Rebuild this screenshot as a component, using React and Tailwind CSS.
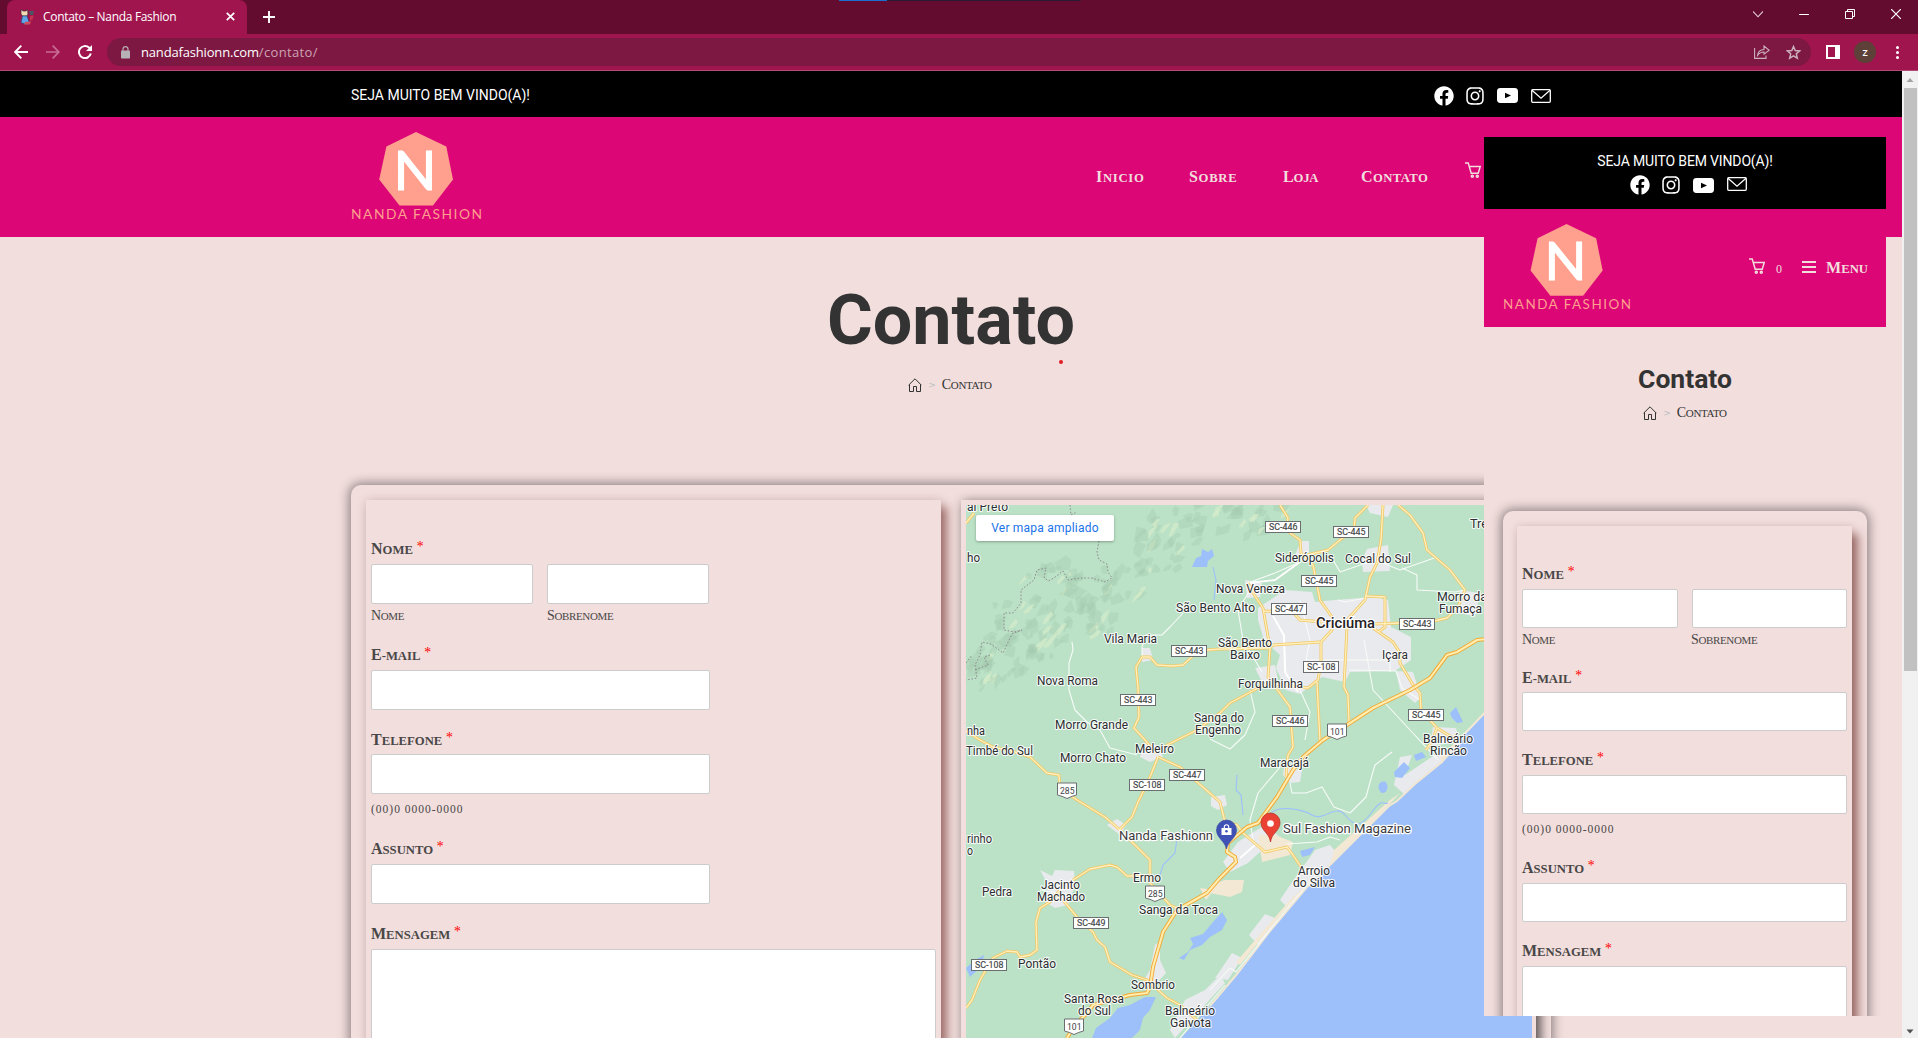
import React from "react";
import { FaFacebook, FaInstagram } from "react-icons/fa";

const CAPS_BOLD = "block font-['Liberation_Serif',serif] text-[12.7px] font-bold uppercase first-letter:text-[16px]";
const CAPS_THIN = "block font-['Liberation_Serif',serif] text-[11px] uppercase tracking-[-0.35px] first-letter:text-[14px]";

/* ---------- icons ---------- */

function YoutubeIcon() {
  return (
    <svg className="h-[15px] w-[21px]" viewBox="0 0 21 15">
      <rect width="21" height="15" rx="3.4" fill="#fff" />
      <path d="M8 4.8 L14 7.5 L8 10.2 Z" fill="#000" />
    </svg>
  );
}

function MailIcon() {
  return (
    <svg className="h-[14px] w-5" viewBox="0 0 20 14" fill="none" stroke="#fff" strokeWidth="1.3">
      <rect x="0.7" y="0.7" width="18.6" height="12.6" rx="1" />
      <path d="M1 1.2 L10 9.2 L19 1.2" />
    </svg>
  );
}

function CartIcon() {
  return (
    <svg className="h-4 w-4 shrink-0" viewBox="0 0 16 16" fill="none" stroke="#f2dedd" strokeWidth="1.5">
      <path d="M0 0.9 H3.2 L6.2 11.2 H13.2 L15.2 4.6 H4.3" />
      <circle cx="7.3" cy="14.2" r="1" />
      <circle cx="12.3" cy="14.2" r="1" />
    </svg>
  );
}

function HomeIcon() {
  return (
    <svg className="h-[14px] w-[14px]" viewBox="0 0 14 14" fill="none" stroke="#333" strokeWidth="1">
      <path d="M0.6 7.2 L7 0.8 L13.4 7.2 M1.5 6.4 V13.5 H5.5 V8.5 H8.5 V13.5 H12.5 V6.4" />
    </svg>
  );
}

function Logo({ className }) {
  return (
    <svg className={className} viewBox="0 0 131 90">
      <path d="M65 0 L95.3 14.6 L102 47.6 L82 73.5 H48.5 L28.2 47.6 L35.4 14.6 Z" fill="#ff9f8d" />
      <text x="42.5" y="57.5" fontFamily="Lato, sans-serif" fontSize="54" textLength="43" lengthAdjust="spacingAndGlyphs" fill="#fff" stroke="#fff" strokeWidth="1.2">N</text>
      <text x="0" y="86.6" fontFamily="Lato, sans-serif" fontSize="13.8" textLength="131" fill="#ff9f8d">NANDA FASHION</text>
    </svg>
  );
}

function Social({ mailClass }) {
  return (
    <div className="flex items-center text-white">
      <FaFacebook className="h-5 w-5" />
      <FaInstagram className="ml-[11px] h-[20px] w-[20px]" />
      <span className="ml-3"><YoutubeIcon /></span>
      <span className={mailClass}><MailIcon /></span>
    </div>
  );
}

function Breadcrumb({ className }) {
  return (
    <div className={`flex items-center justify-center leading-[18px] text-[#333] ${className}`}>
      <HomeIcon />
      <span className="ml-[6px] font-['DejaVu_Sans',sans-serif] text-[9px] text-[#b9c0c0]">&gt;</span>
      <span className={`ml-[6px] ${CAPS_THIN}`}>Contato</span>
    </div>
  );
}

/* ---------- browser frame ---------- */

function TabBar() {
  return (
    <div className="relative flex h-[34px] shrink-0 bg-[#640c30] pl-[7px]">
      <div className="flex h-[34px] w-60 items-center rounded-t-lg bg-[#a1154f] pb-[1px] pl-3 pr-[12px]">
        <svg className="h-4 w-4" viewBox="0 0 16 16">
          <path d="M2 0.5 L4 2 L7 2 L8.5 0.5 L9 5 L8 7 H3.5 L2 5 Z" fill="#f3d9b4" stroke="#3b2a35" strokeWidth="0.7" />
          <path d="M3.5 7 H8 L10 13 L7 15.5 L2 13.5 Z" fill="#5ea4ea" stroke="#27446b" strokeWidth="0.6" />
          <path d="M10 2 H15 L14 6 H11 Z" fill="#4c5563" />
          <path d="M11 7 L14.5 6.5 L14 10 L11 12 Z" fill="#c3324e" />
          <path d="M6 13 L12 12.5 L11 15.5 L5 15.5 Z" fill="#d44b5c" />
        </svg>
        <span className="ml-2 whitespace-nowrap font-['Open_Sans',sans-serif] text-[12px] tracking-[-0.32px] text-white">Contato – Nanda Fashion</span>
        <svg className="ml-auto h-[9px] w-[9px]" viewBox="0 0 9 9" stroke="#fff" strokeWidth="1.7"><path d="M0.8 0.8 L8.2 8.2 M8.2 0.8 L0.8 8.2" /></svg>
      </div>
      <svg className="ml-4 mt-[11px] h-3 w-3" viewBox="0 0 12 12" stroke="#fff" strokeWidth="1.9"><path d="M6 0 V12 M0 6 H12" /></svg>
      <div className="absolute left-[839px] top-0 flex h-[1px] w-[242px] bg-[#2b1a33]"><div className="w-12 bg-[#1a6fd0]" /></div>
      <div className="ml-auto mr-[17px] flex h-[28px] items-center gap-[36px]">
        <svg className="h-[10px] w-[10px]" viewBox="0 0 10 10" fill="none" stroke="#e3cdd6" strokeWidth="1.1"><path d="M0 2.5 L5 7.8 L10 2.5" /></svg>
        <svg className="h-[10px] w-[10px]" viewBox="0 0 10 10"><path d="M0 5 H10 V6 H0 Z" fill="#fff" /></svg>
        <svg className="h-[10px] w-[10px]" viewBox="0 0 10 10" fill="none" stroke="#fff" strokeWidth="1"><path d="M0.5 2.5 H7.5 V9.5 H0.5 Z M2.5 2.5 V0.5 H9.5 V7.5 H7.5" /></svg>
        <svg className="h-[10px] w-[10px]" viewBox="0 0 10 10" stroke="#fff" strokeWidth="1.2"><path d="M0 0 L10 10 M10 0 L0 10" /></svg>
      </div>
    </div>
  );
}

function Toolbar() {
  return (
    <div className="flex h-[37px] shrink-0 items-center border-b border-[#b14a78] bg-[#a1154f] pl-[14px]">
      <svg className="h-[14px] w-[14px]" viewBox="0 0 14 14" fill="none" stroke="#fff" strokeWidth="1.9"><path d="M14 7 H1.5 M7.3 0.7 L1.2 7 L7.3 13.3" /></svg>
      <svg className="ml-[18px] h-[14px] w-[14px]" viewBox="0 0 14 14" fill="none" stroke="#c76d95" strokeWidth="1.7"><path d="M0 7 H12.5 M6.7 0.7 L12.8 7 L6.7 13.3" /></svg>
      <svg className="ml-[18px] h-[14px] w-[14px]" viewBox="0 0 14 14" fill="none" stroke="#fff" strokeWidth="2"><path d="M12.8 8.6 A6 6 0 1 1 11 2.6 L12.6 4.2" /><path d="M14 0 V6 H8 Z" fill="#fff" stroke="none" /></svg>
      <div className="ml-[15px] flex h-7 w-[1704px] items-center rounded-full bg-[#7d1842] pl-[14px] pr-[10px]">
        <svg className="h-[13px] w-[9px]" viewBox="0 0 9 13"><rect y="4.5" width="9" height="8" rx="0.8" fill="#b7b1b6" /><path d="M2 5 V3 a2.5 2.4 0 0 1 5 0 V5" fill="none" stroke="#b7b1b6" strokeWidth="1.2" /></svg>
        <span className="ml-[11px] mt-[1px] whitespace-nowrap font-['Open_Sans',sans-serif] text-[13px] text-white">
          <span className="tracking-[-0.17px]">nandafashionn.com</span><span className="tracking-[0.35px] text-[#cda3b4]">/contato/</span>
        </span>
        <svg className="ml-auto h-[14px] w-4" viewBox="0 0 16 14" fill="none" stroke="#cbb0bd" strokeWidth="1.1"><path d="M0.6 3 V13.4 H12 V10.5" /><path d="M3.6 10.3 C4 6.5 6.5 4.8 10 4.5 V1 L15.2 5.2 L10 9.2 V7 C7.5 7 5.3 8 3.6 10.3 Z" /></svg>
        <svg className="ml-4 h-[15px] w-[15px]" viewBox="0 0 15 15" fill="none" stroke="#cbb0bd" strokeWidth="1.5"><path d="M7.5 1.6 L9.2 5.5 L13.6 5.9 L10.3 8.8 L11.3 13.1 L7.5 10.8 L3.7 13.1 L4.7 8.8 L1.4 5.9 L5.8 5.5 Z" /></svg>
      </div>
      <div className="ml-[15px] h-[14px] w-[14px] border-2 border-r-[5px] border-white" />
      <div className="ml-[14px] flex h-[22px] w-[22px] items-center justify-center rounded-full bg-[#5d4037] font-['Open_Sans',sans-serif] text-[9px] font-semibold leading-none text-white">Z</div>
      <div className="ml-5 flex flex-col gap-[2px]">
        <div className="h-[3px] w-[3px] rounded-full bg-white" />
        <div className="h-[3px] w-[3px] rounded-full bg-white" />
        <div className="h-[3px] w-[3px] rounded-full bg-white" />
      </div>
    </div>
  );
}

function Scrollbar() {
  return (
    <div className="flex w-4 shrink-0 flex-col items-center bg-[#f1f1f1]">
      <svg className="h-[17px] w-4 shrink-0" viewBox="0 0 16 17"><path d="M4.5 11 L8 7 L11.5 11 Z" fill="#a3a3a3" /></svg>
      <div className="h-[583px] w-[13px] bg-[#c1c1c1]" />
      <svg className="mt-auto h-[14px] w-4 shrink-0" viewBox="0 0 16 14"><path d="M4.5 5.5 L8 9.5 L11.5 5.5 Z" fill="#505050" /></svg>
    </div>
  );
}

/* ---------- contact form ---------- */

function Label({ children, className = "" }) {
  return (
    <div className={`flex h-[18px] whitespace-nowrap leading-[18px] text-[#494747] ${className}`}>
      <span className={CAPS_BOLD}>{children}</span>
      <span className="-mt-[2px] ml-[3px] font-['Liberation_Serif',serif] text-[14px] italic text-[#ff0000]">*</span>
    </div>
  );
}

const BOX = "rounded-[2px] border border-[#ccc] bg-white";

function SubLabel({ children, className = "" }) {
  return <div className={`h-[18px] leading-[18px] text-[#494747] ${CAPS_THIN} ${className}`}>{children}</div>;
}

function PhoneHint({ className }) {
  return <div className={`h-[18px] font-['Liberation_Serif',serif] text-[11.5px] leading-[18px] tracking-[1px] text-[#494747] ${className}`}>(00)0 0000-0000</div>;
}

function DesktopForm() {
  return (
    <div className="w-[575px] shrink-0 bg-[#f2dedd] px-[5px] pt-10 shadow-[6px_7px_9px_rgba(120,60,55,0.65),0_0_10px_rgba(60,20,20,0.14)]">
      <Label>Nome</Label>
      <div className="mt-[6px] flex gap-[14px]">
        <div className={`h-10 w-[162px] ${BOX}`} />
        <div className={`h-10 w-[162px] ${BOX}`} />
      </div>
      <div className="mt-[3px] flex">
        <SubLabel className="w-[176px]">Nome</SubLabel>
        <SubLabel>Sobrenome</SubLabel>
      </div>
      <Label className="mt-[21px]">E-mail</Label>
      <div className={`mt-[6px] h-10 w-[339px] ${BOX}`} />
      <Label className="mt-[21px]">Telefone</Label>
      <div className={`mt-[5px] h-10 w-[339px] ${BOX}`} />
      <PhoneHint className="mt-[6px]" />
      <Label className="mt-[22px]">Assunto</Label>
      <div className={`mt-[6px] h-10 w-[339px] ${BOX}`} />
      <Label className="mt-[21px]">Mensagem</Label>
      <div className={`mt-[6px] h-40 w-[565px] ${BOX}`} />
    </div>
  );
}

function MobileForm() {
  return (
    <div className="h-full bg-[#f2dedd] px-[5px] pt-[39px] shadow-[6px_8px_9px_rgba(120,60,55,0.7),0_0_8px_rgba(60,20,20,0.12)]">
      <Label>Nome</Label>
      <div className="mt-[6px] flex gap-[14px]">
        <div className={`h-[39px] flex-1 ${BOX}`} />
        <div className={`h-[39px] flex-1 ${BOX}`} />
      </div>
      <div className="mt-[3px] flex">
        <SubLabel className="w-[169px]">Nome</SubLabel>
        <SubLabel>Sobrenome</SubLabel>
      </div>
      <Label className="mt-5">E-mail</Label>
      <div className={`mt-[5px] h-[39px] ${BOX}`} />
      <Label className="mt-5">Telefone</Label>
      <div className={`mt-[6px] h-[39px] ${BOX}`} />
      <PhoneHint className="mt-[6px]" />
      <Label className="mt-[21px]">Assunto</Label>
      <div className={`mt-[6px] h-[39px] ${BOX}`} />
      <Label className="mt-5">Mensagem</Label>
      <div className={`mt-[6px] h-40 ${BOX}`} />
    </div>
  );
}

/* ---------- map ---------- */

const ROADS = [
  "1220,649 1207,650 1196,653 1183,665 1172,666 1157,665 1150,657 1142,657 1136,667 1138,687 1139,717 1134,728 1145,740 1156,753",
  "1160,751 1167,745 1197,730 1220,713 1230,703 1258,688 1268,683",
  "966,523 974,513",
  "966,731 980,740 993,747 1012,751 1030,757 1047,773 1059,775 1060,788 1077,800 1105,817 1120,830 1150,860 1150,883 1170,905 1177,908",
  "1158,757 1150,777 1144,790 1138,802 1132,817 1120,829",
  "1158,757 1180,767 1197,782 1220,802 1225,822 1237,825 1243,833 1265,852 1287,847 1293,855 1303,870",
  "1073,880 1090,869 1110,865 1117,867 1127,876 1150,876",
  "1060,890 1050,902 1040,908 1036,922 1037,950 1030,955 1020,957 1017,952 1007,951 993,958 980,980 972,1000 966,1008",
  "1063,900 1077,917 1093,932 1097,940 1105,947 1110,962 1132,975 1147,980 1167,998 1180,1005 1197,1020",
  "1280,505 1288,518 1286,530 1300,540 1301,553 1313,565 1318,590 1320,600 1332,617 1332,630 1321,642 1321,663 1318,680 1308,688 1268,683",
  "1368,505 1355,518 1354,530 1340,540 1328,550 1307,555",
  "1383,505 1381,540 1377,563 1370,577 1365,600 1347,620",
  "1398,505 1410,515 1423,533 1427,550 1450,570 1465,590 1458,607 1447,618 1430,622 1373,624",
  "1365,596 1385,597 1385,627 1378,632",
  "1373,628 1393,642 1400,653 1400,663 1413,685 1420,693 1421,710 1437,728 1453,738",
  "1437,728 1432,741 1426,750",
  "1347,627 1344,687 1348,695 1349,723",
  "1317,682 1320,742",
  "1220,649 1270,648 1273,645 1320,642",
  "1248,583 1253,593 1263,608 1270,648 1268,677 1290,707 1293,747 1288,755 1286,777",
  "1263,611 1293,612 1300,620 1323,622",
];

const HIGHWAYS = [
  "1067,1038 1075,1025 1087,1013 1093,1005 1130,995 1147,993 1150,987 1153,967 1163,932 1177,910 1207,893 1220,878 1236,862 1235,857 1227,852 1228,843 1247,827 1258,823 1277,797 1293,770 1303,757 1323,740 1347,725 1373,708 1410,690 1430,678 1447,655 1457,652 1477,640 1487,639",
];

const MINOR = [
  "1072,642 1073,650 1069,663 1069,690 1075,710 1087,722 1100,730 1110,748 1137,755",
  "1183,613 1170,627 1162,635 1146,635 1142,647 1142,657",
  "1248,583 1275,573 1300,562",
  "1250,590 1238,610 1243,640 1262,672",
  "1402,568 1417,575 1417,590 1455,592 1465,590",
  "1300,560 1332,558 1340,572 1375,560 1400,570 1437,557",
  "1275,620 1284,637 1286,675 1300,690 1310,712 1305,740",
  "1210,739 1230,749 1245,735 1255,712 1250,690",
  "1364,640 1373,690 1410,730 1438,760",
  "1300,600 1310,640 1306,660 1390,660 1390,672",
  "1349,670 1396,671 1402,688 1420,700",
  "1338,600 1345,602 1365,598",
  "1280,767 1258,793 1250,820 1253,840",
  "1392,752 1375,765 1372,775 1366,797 1350,813 1334,807 1322,787 1306,793 1292,793 1290,783",
  "1287,844 1317,842 1330,837 1340,840",
  "1210,990 1230,968 1236,972 1290,905 1320,870",
  "1040,890 1060,893 1080,897",
  "1180,1038 1225,985",
];

const URBAN = [
  "1245,580 1262,583 1260,597 1247,598",
  "1301,541 1309,541 1309,556 1295,555",
  "1366,505 1393,505 1388,517 1370,513",
  "1367,549 1388,545 1390,571 1363,572 1362,560",
  "1258,608 1285,590 1312,592 1315,602 1335,600 1375,597 1388,600 1391,627 1411,637 1411,660 1395,671 1350,672 1345,682 1322,677 1300,694 1286,690 1276,668 1280,655 1264,640 1258,620",
  "1255,668 1275,665 1278,680 1262,682",
  "1396,671 1413,672 1421,697 1415,703 1400,690",
  "1460,590 1480,593 1475,617 1458,612",
  "1433,727 1456,728 1460,742 1430,746",
  "1142,648 1150,648 1153,660 1142,662",
  "1145,743 1157,745 1163,757 1150,762 1140,757",
  "1107,825 1117,819 1126,825 1120,835",
  "1040,870 1052,876 1055,870 1074,871 1075,885 1068,905 1055,908 1045,902 1048,885",
  "1155,945 1160,942 1160,960 1166,973 1155,985 1141,985 1150,970",
  "1284,767 1302,770 1300,782 1290,783 1283,775",
  "1211,797 1225,795 1227,805 1218,810 1211,806",
  "1238,842 1265,825 1290,845 1287,852 1262,850 1248,863 1230,872 1223,862",
  "1315,850 1330,845 1340,857 1290,910 1280,900 1290,885",
  "1265,914 1280,920 1258,945 1249,935",
  "1232,953 1242,958 1228,980 1215,978",
  "1400,757 1412,755 1405,775 1442,750 1452,755 1405,795 1394,785",
  "1185,1000 1205,990 1220,975 1225,983 1175,1038 1170,1030",
];

const SAND = [
  "1440,758 1484,712 1484,722 1443,763",
  "1390,800 1400,793 1360,836 1350,845 1330,865 1334,850",
  "1258,835 1275,835 1293,842 1290,855 1262,862",
  "1210,885 1225,880 1244,880 1242,892 1230,897 1210,893",
  "1200,888 1214,890 1206,900",
  "1290,900 1307,885 1270,928 1240,965 1236,962",
];

const WATER = [
  "1192,567 1196,558 1201,556 1202,549 1208,552 1212,549 1214,556 1208,561 1207,567",
  "1450,713 1456,707 1463,722 1457,723 1452,718",
  "1380,785 1386,781 1386,792 1381,793",
  "1394,772 1404,762 1410,768 1402,778 1395,777",
  "1414,755 1422,752 1426,757 1416,761",
  "1300,851 1315,847 1310,855 1302,857",
  "1179,958 1188,952 1193,944 1190,938 1203,934 1213,922 1222,912 1227,920 1222,930 1210,937 1202,945 1190,950 1184,960",
  "1092,1038 1096,1028 1110,1018 1118,1008 1130,1005 1145,997 1156,997 1150,1010 1143,1018 1140,1030 1132,1038",
  "966,968 975,960 984,955 982,966 970,977",
];

const LABELS = [
  ["al Preto", 967, 511, 41], ["ho", 967, 562, 13], ["Vila Maria", 1104, 643, 53], ["Nova Roma", 1037, 685, 61],
  ["Morro Grande", 1055, 729, 73], ["nha", 967, 735, 18], ["Timbé do Sul", 966, 755, 67], ["Morro Chato", 1060, 762, 66],
  ["Meleiro", 1135, 753, 39], ["São Bento Alto", 1176, 612, 79], ["Nova Veneza", 1216, 593, 69], ["Siderópolis", 1275, 562, 59],
  ["Cocal do Sul", 1345, 563, 66], ["Morro da", 1437, 601, 50], ["Fumaça", 1439, 613, 43], ["Tre", 1470, 528, 18],
  ["São Bento", 1218, 647, 54], ["Baixo", 1230, 659, 30], ["Forquilhinha", 1238, 688, 65], ["Içara", 1382, 659, 26],
  ["Sanga do", 1194, 722, 50], ["Engenho", 1195, 734, 46], ["Balneário", 1423, 743, 50], ["Rincão", 1430, 755, 37],
  ["Maracajá", 1260, 767, 49], ["Ermo", 1133, 882, 28], ["rinho", 967, 843, 25], ["o", 967, 855, 6],
  ["Jacinto", 1041, 889, 39], ["Machado", 1037, 901, 48], ["Pedra", 982, 896, 30], ["Sanga da Toca", 1139, 914, 79],
  ["Pontão", 1018, 968, 38], ["Sombrio", 1131, 989, 44], ["Santa Rosa", 1064, 1003, 60], ["do Sul", 1078, 1015, 33],
  ["Balneário", 1165, 1015, 50], ["Gaivota", 1170, 1027, 41], ["Arroio", 1298, 875, 32], ["do Silva", 1293, 887, 42],
];

const SHIELDS = [
  ["SC-443", 1171.5, 645.5], ["SC-443", 1120.5, 694.5], ["SC-446", 1265.5, 521.5], ["SC-445", 1333.5, 526.5],
  ["SC-445", 1301.5, 575.5], ["SC-447", 1271.5, 603.5], ["SC-443", 1399.5, 618.5], ["SC-108", 1303.5, 661.5],
  ["SC-446", 1272.5, 715.5], ["SC-445", 1408.5, 709.5], ["SC-447", 1169.5, 769.5], ["SC-108", 1129.5, 779.5],
  ["SC-449", 1073.5, 917.5], ["SC-108", 971.5, 959.5],
];

const BR = [["101", 1337, 731], ["285", 1067, 790], ["285", 1155, 893], ["101", 1074, 1026]];

const RIDGE = [[1262, 512, 24], [1225, 522, 32], [1175, 525, 30], [1165, 552, 30], [1120, 578, 28], [1085, 588, 28], [1048, 588, 26], [1025, 622, 30], [1005, 650, 26], [985, 672, 20], [1090, 615, 24], [1045, 640, 22]];

/* Irregular facets that give the mountain range its relief. */
function facets() {
  let seed = 11;
  const rnd = () => {
    seed = (seed * 16807) % 2147483647;
    return seed / 2147483647;
  };
  const out = [];
  for (const [x, y, r] of RIDGE) {
    for (let i = 0; i < 17; i++) {
      const cx = x + (rnd() - 0.5) * 2 * r;
      const cy = y + (rnd() - 0.5) * 1.7 * r;
      const light = rnd() > 0.8;
      const s = light ? 8 + rnd() * 5 : 5 + rnd() * 8;
      const narrow = light ? 0.35 : 0.8;
      const corners = [];
      for (let k = 0; k < 5; k++) {
        const a = (k / 5) * Math.PI * 2 + rnd();
        const d = s * (0.4 + rnd() * 0.7);
        const u = Math.cos(a) * d;
        const v = Math.sin(a) * d * narrow;
        corners.push(`${(cx + u * 0.6 + v * 0.7).toFixed(1)},${(cy - u * 0.75 + v * 0.6).toFixed(1)}`);
      }
      out.push([corners.join(" "), light ? "#d6edcb" : "#a3cbb0", light ? 0.7 : 0.36]);
    }
  }
  return out;
}

const FACETS = facets();

function Shapes({ list, fill }) {
  return list.map((p) => <polygon key={p} points={p} fill={fill} />);
}

function Lines({ list, stroke, width }) {
  return list.map((p) => <polyline key={p} points={p} fill="none" stroke={stroke} strokeWidth={width} strokeLinejoin="round" />);
}

function MapDrawing() {
  return (
    <svg className="block h-[533px] w-[566px]" viewBox="966 505 566 533" fontFamily="Roboto, sans-serif">
      <rect x="966" y="505" width="566" height="533" fill="#bbe2c6" />
      {FACETS.map(([p, f, o]) => <polygon key={p} points={p} fill={f} opacity={o} />)}
      <Shapes list={URBAN} fill="#e8eaed" />
      <Shapes list={SAND} fill="#f3e8d3" />
      <Shapes list={WATER} fill="#9dc0fa" />
      <ellipse cx="1383" cy="787" rx="4.5" ry="5.5" fill="#9dc0fa" />
      <polygon points="1484,715 1463,737 1442,762 1415,784 1397,801 1389,806 1357,838 1320,875 1307,887 1270,931 1237,974 1210,1006 1181,1038 1532,1038 1532,505 1484,505" fill="#9dc0fa" />
      <polyline points="1464,737 1442,762 1415,784 1397,801 1389,806 1357,838 1320,875 1307,887 1270,931 1237,974 1210,1006" fill="none" stroke="#efe6d4" strokeWidth="2" />
      <path d="M1270 815 C1275 805 1300 808 1312 815 S1335 803 1345 815 S1360 828 1372 812 S1382 806 1388 803 M1237 775 L1236 790 L1241 795 L1243 815 M1213 567 L1216 580 L1214 600 M1177 838 L1175 853 L1163 865 L1160 875" fill="none" stroke="#9dc0fa" strokeWidth="1.1" />
      <path d="M1070 505 L1071 515 L1077 512 M1099 541 L1097 552 L1099 560 L1107 564 L1108 572 L1112 578 L1105 582 L1092 578 L1080 578 L1068 580 L1063 571 L1054 578 L1048 581 L1044 577 L1046 568 L1037 570 L1034 580 L1021 590 L1021 603 L1013 613 L1004 613 L1004 630 L1014 632 L1022 630 L1012 634 L1003 653 L991 644 L982 642 L980 655 L975 665 L977 678 L966 680 M990 655 L984 657 L988 665 L975 670 M966 663 L972 655" fill="none" stroke="#8f8a8f" strokeWidth="1" strokeDasharray="1.6 1.8" />
      <Lines list={MINOR} stroke="#f7fbf8" width="1.1" />
      <Lines list={["1273,616 1284,635 1285,672 1298,692", "1248,583 1275,580 1300,562", "1255,845 1240,858"]} stroke="#fff" width="1.8" />
      <Lines list={ROADS} stroke="#f2c765" width="2.9" />
      <Lines list={ROADS} stroke="#fff0bd" width="1.3" />
      <Lines list={HIGHWAYS} stroke="#f2a933" width="4" />
      <Lines list={HIGHWAYS} stroke="#ffedb0" width="2.1" />
      {SHIELDS.map(([t, x, y]) => (
        <g key={`${x}-${y}`}>
          <rect x={x} y={y} width="35" height="11" fill="#fff" stroke="#6b6e70" />
          <text x={x + 3.6} y={y + 8.7} fontSize="8.8" textLength="28.4" lengthAdjust="spacingAndGlyphs" fill="#404244" stroke="#404244" strokeWidth="0.15">{t}</text>
        </g>
      ))}
      {BR.map(([t, x, y]) => (
        <g key={`${x}-${y}`}>
          <path d={`M${x - 9.5} ${y - 7} H${x + 9.5} V${y + 5} Q${x + 5} ${y + 6} ${x} ${y + 8.5} Q${x - 5} ${y + 6} ${x - 9.5} ${y + 5} Z`} fill="#fff" stroke="#6b6e70" />
          <text x={x - 7} y={y + 3.6} fontSize="9.4" textLength="14.5" lengthAdjust="spacingAndGlyphs" fill="#404244">{t}</text>
        </g>
      ))}
      {LABELS.map(([t, x, y, w]) => (
        <text key={`${x}-${y}`} x={x} y={y} fontSize="12" textLength={w} lengthAdjust="spacingAndGlyphs" fill="#2b2d30" stroke="#fff" strokeWidth="2.2" strokeOpacity="0.85" strokeLinejoin="round" paintOrder="stroke">{t}</text>
      ))}
      <text x="1316" y="627.5" fontSize="14" fontWeight="500" textLength="59" lengthAdjust="spacingAndGlyphs" fill="#1f2124" stroke="#fff" strokeWidth="2.2" paintOrder="stroke">Criciúma</text>
      <g fontSize="13" fill="#3c3c40" stroke="#fff" strokeWidth="2.4" paintOrder="stroke" strokeLinejoin="round">
        <text x="1119" y="839.5" textLength="94" lengthAdjust="spacingAndGlyphs">Nanda Fashionn</text>
        <text x="1283" y="832.5" textLength="128" lengthAdjust="spacingAndGlyphs">Sul Fashion Magazine</text>
      </g>
      <path d="M1226.5 849 C1225 841 1216.5 838 1216.5 830 A10 10 0 0 1 1236.5 830 C1236.5 838 1228 841 1226.5 849 Z" fill="#3f51b5" stroke="#303f9f" strokeWidth="0.6" />
      <path d="M1221.5 828 H1231.5 V835 H1221.5 Z" fill="#fff" />
      <path d="M1224.3 828 V827 a2.2 2.2 0 0 1 4.4 0 V828" fill="none" stroke="#fff" strokeWidth="1.1" />
      <circle cx="1226.5" cy="831.3" r="1.3" fill="#3f51b5" />
      <path d="M1270.5 842 C1269.5 833 1261 831 1261 822.5 A9.5 9.5 0 0 1 1280 822.5 C1280 831 1271.5 833 1270.5 842 Z" fill="#ea4335" stroke="#b3261e" strokeWidth="0.7" />
      <circle cx="1270.5" cy="823.5" r="3.3" fill="#fff" />
    </svg>
  );
}

/* ---------- page ---------- */

function DesktopSite() {
  return (
    <div className="flex min-w-0 flex-1 flex-col overflow-hidden bg-[#f2dedd]">
      <div className="h-[46px] shrink-0 bg-black">
        <div className="ml-[351px] flex h-full w-[1200px] items-center justify-between">
          <span className="mt-[2px] font-['Roboto',sans-serif] text-[14px] text-white">SEJA MUITO BEM VINDO(A)!</span>
          <div className="mt-[3px]"><Social mailClass="ml-[13px]" /></div>
        </div>
      </div>
      <div className="h-[120px] shrink-0 bg-[#dc0677]">
        <div className="ml-[351px] flex h-full w-[1200px] items-start">
          <Logo className="mt-[15px] h-[90px] w-[131px]" />
          <nav className="ml-auto mr-[70px] mt-[51px] flex leading-[18px] text-[#f2dedd]">
            <span className={`w-[93px] tracking-[0.7px] ${CAPS_BOLD}`}>Inicio</span>
            <span className={`w-[94px] tracking-[0.7px] ${CAPS_BOLD}`}>Sobre</span>
            <span className={`w-[78px] tracking-[-0.2px] ${CAPS_BOLD}`}>Loja</span>
            <span className={`w-[104px] tracking-[0.4px] ${CAPS_BOLD}`}>Contato</span>
            <span className="-mt-[6px]"><CartIcon /></span>
          </nav>
        </div>
      </div>
      <div className="relative flex h-[248px] shrink-0 flex-col items-center pt-[43px]">
        <h1 className="h-[82px] font-['Roboto',sans-serif] text-[70px] font-bold leading-[80px] text-[#333]">Contato</h1>
        <Breadcrumb className="mt-[14px] pr-[2px]" />
        <div className="absolute left-[1059px] top-[123px] h-1 w-1 rounded-full bg-[#e31b23]" />
      </div>
      <div className="ml-[351px] flex h-[700px] w-[1200px] gap-5 rounded-[10px] pl-[15px] pt-[15px] shadow-[0_0_11px_2px_rgba(0,0,0,0.42)]">
        <DesktopForm />
        <div className="w-[575px] bg-[#f2dedd] pl-[5px] pt-[5px] shadow-[5px_4px_10px_rgba(0,0,0,0.55),0_0_10px_rgba(0,0,0,0.2)]">
          <div className="relative">
            <MapDrawing />
            <div className="absolute left-[10px] top-[10px] flex h-[26px] w-[138px] items-center justify-center rounded-[2px] bg-white font-['Roboto',sans-serif] text-[12px] tracking-[0.22px] text-[#1a73e8] shadow-[0_1px_3px_rgba(0,0,0,0.3)]">Ver mapa ampliado</div>
          </div>
        </div>
      </div>
    </div>
  );
}

function PhonePreview() {
  return (
    <div className="absolute left-[1484px] top-[137px] flex h-[879px] w-[402px] flex-col overflow-hidden bg-[#f2dedd]">
      <div className="flex h-[72px] shrink-0 flex-col items-center bg-black pt-[16px]">
        <span className="font-['Roboto',sans-serif] text-[14px] leading-4 tracking-[-0.15px] text-white">SEJA MUITO BEM VINDO(A)!</span>
        <div className="mt-[6px] pl-[6px]"><Social mailClass="-mt-[3px] ml-[13px]" /></div>
      </div>
      <div className="flex h-[118px] shrink-0 items-start bg-[#dc0677] pl-[19px] pr-[18px]">
        <Logo className="mt-[15px] h-[88px] w-[128px]" />
        <div className="ml-auto mt-[49px] flex h-[18px] items-start leading-[18px] text-[#f2dedd]">
          <CartIcon />
          <span className="ml-[11px] mt-[2px] font-['Liberation_Serif',serif] text-[12px]">0</span>
          <span className="ml-5 mt-[3px] flex w-[14px] flex-col gap-[3px]">
            <span className="h-[2px] bg-[#f2dedd]" />
            <span className="h-[2px] bg-[#f2dedd]" />
            <span className="h-[2px] bg-[#f2dedd]" />
          </span>
          <span className={`ml-[10px] mt-[1px] ${CAPS_BOLD}`}>Menu</span>
        </div>
      </div>
      <h2 className="mt-[36px] text-center font-['Roboto',sans-serif] text-[26.5px] font-bold leading-8 text-[#333]">Contato</h2>
      <Breadcrumb className="mt-[9px]" />
      <div className="ml-[19px] mt-[89px] h-[600px] w-[364px] shrink-0 rounded-[10px] pl-[14px] pr-[15px] pt-[15px] shadow-[0_0_11px_2px_rgba(0,0,0,0.42)]">
        <MobileForm />
      </div>
    </div>
  );
}

export default function App() {
  return (
    <div className="relative flex h-[1038px] w-[1918px] flex-col overflow-hidden bg-[#f2dedd]">
      <TabBar />
      <Toolbar />
      <div className="flex min-h-0 flex-1">
        <DesktopSite />
        <Scrollbar />
      </div>
      <PhonePreview />
    </div>
  );
}
